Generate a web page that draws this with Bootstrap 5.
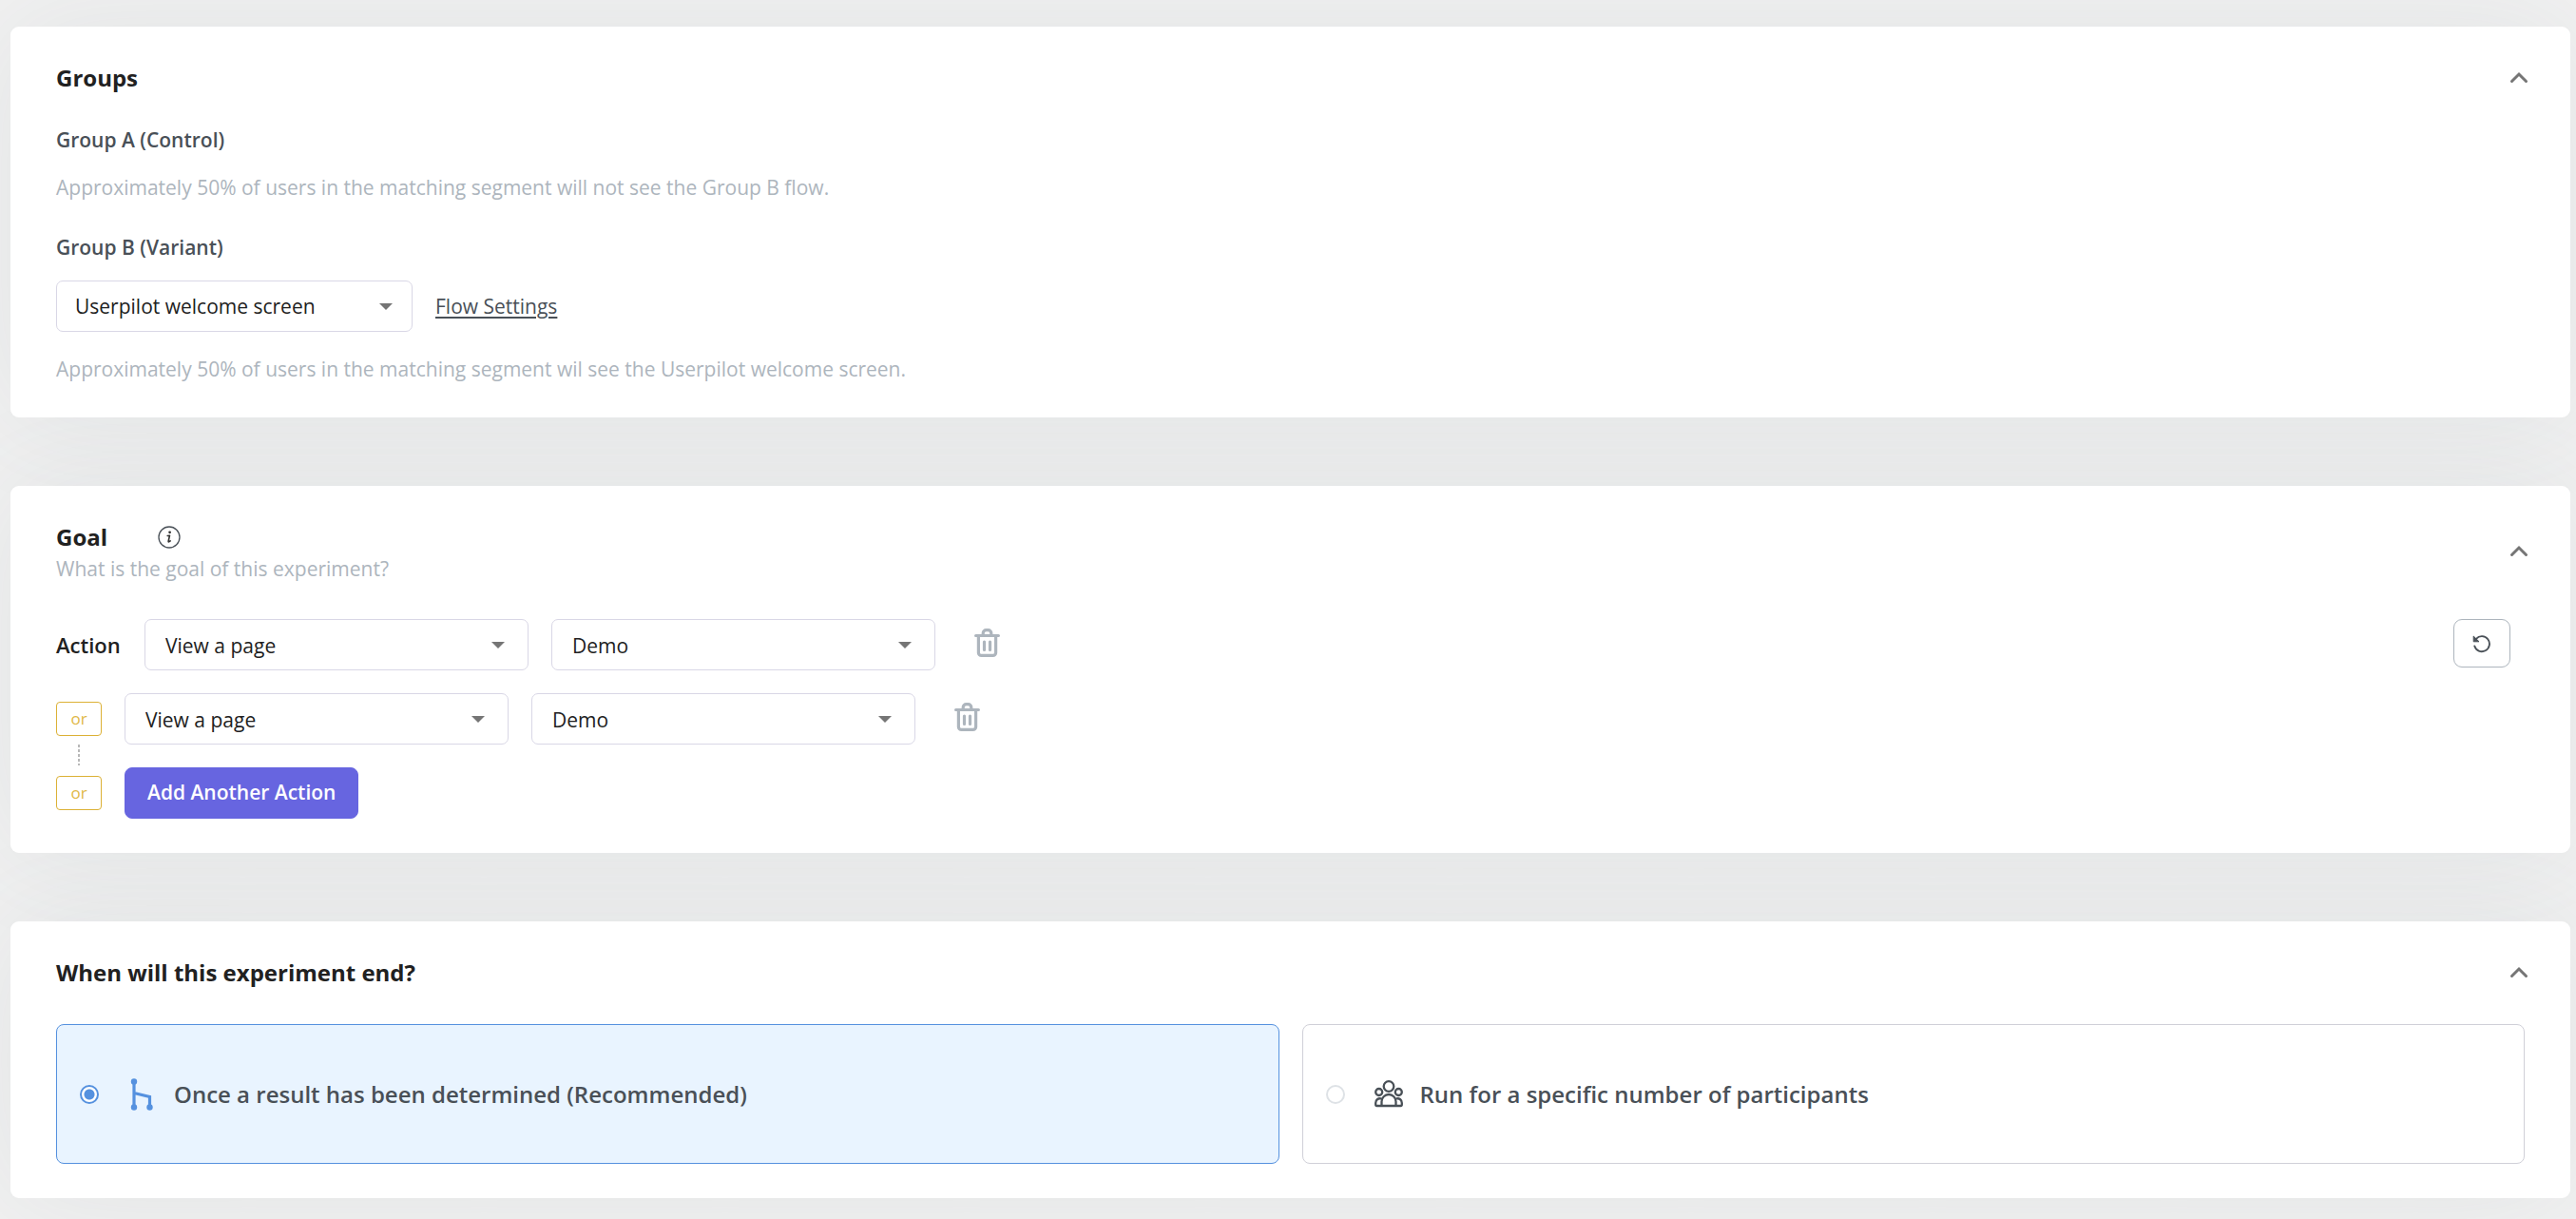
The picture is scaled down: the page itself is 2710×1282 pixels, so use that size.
<!DOCTYPE html>
<html lang="en">
<head>
<meta charset="utf-8">
<meta name="viewport" content="width=device-width, initial-scale=1">
<title>Experiment settings</title>
<link href="https://cdn.jsdelivr.net/npm/bootstrap@5.3.0/dist/css/bootstrap.min.css" rel="stylesheet">
<style>
  body { background: #f1f1f1; color: #212121; font-family: "Open Sans", "Noto Sans", sans-serif; font-size: 21px; line-height: 30px; overflow-x: hidden; }
  .page { padding: 28px 6px 22px 11px; gap: 72px; isolation: isolate; }
  .panel { position: relative; background: #fff; border-radius: 9px; padding: 36px 48px; }
  .panel::before { content: ""; position: absolute; inset: 0; z-index: -1; border-radius: 9px; box-shadow: 0 0 120px rgba(80, 95, 115, .09); }
  .panel-head { margin-right: -6px; }
  .panel h2 { font-size: 24px; line-height: 36px; font-weight: 700; margin: 0; }
  .panel h3 { font-size: 21px; line-height: 30px; font-weight: 600; color: #495057; margin: 0; }
  .hint { color: #adb5bd; margin: 0; }
  .groups-body { gap: 20px; padding-top: 32px; }
  .variant { padding-top: 13px; }
  .goal-body { padding-top: 38px; }
  .end-body { padding-top: 36px; }
  .bare { background: none; border: 0; padding: 0; display: flex; align-items: center; }
  .pick { height: 54px; border: 1px solid #d9d7e6; border-radius: 7px; color: #212121; font-size: 21px; line-height: 30px; padding: 2px 48px 0 21px; width: 404px;
    background: #fff url("data:image/svg+xml,%3Csvg xmlns='http://www.w3.org/2000/svg' viewBox='0 0 14 7'%3E%3Cpath fill='%23757575' d='M0 0h14L7 7z'/%3E%3C/svg%3E") no-repeat right 24px center / 14px 7px; }
  .pick-flow { width: 375px; padding-top: 0; padding-left: 19px; background-position: right 20px center; }
  .flow-link { color: #495057; text-underline-offset: 3px; }
  .action-label { font-size: 22px; font-weight: 600; min-width: 69px; }
  .tool { height: 50px; margin-left: 17px; }
  .or-tag { width: 48px; height: 36px; border: 1px solid #dcb136; border-radius: 4px; color: #e0b848; font-size: 17px; line-height: 34px; text-align: center; }
  .join { position: relative; }
  .join::after { content: ""; position: absolute; left: 22px; top: 44px; width: 2px; height: 22px; background: repeating-linear-gradient(#b8b8b8 0 3px, transparent 3px 5px); }
  .btn-add { --bs-btn-bg: #6765e0; --bs-btn-border-color: #6765e0; --bs-btn-color: #fff; --bs-btn-hover-bg: #5654cf; --bs-btn-hover-color: #fff; height: 54px; padding: 0 23px; font-size: 21px; font-weight: 600; border-radius: 8px; }
  .btn-reset { width: 60px; height: 51px; border: 1px solid #adb5bd; border-radius: 9px; background: #fff; padding: 0; margin-right: 15px; }
  .choice { flex: 1 1 0; height: 147px; border: 1px solid #d0d0d8; border-radius: 8px; padding: 0 24px; font-size: 24px; line-height: 36px; font-weight: 600; color: #495057; cursor: pointer; }
  .choice.picked { background: #e9f4ff; border-color: #5591df; }
  .choice input { appearance: none; width: 20px; height: 20px; margin: 0; border: 2px solid #dee2e6; border-radius: 50%; flex: none; }
  .choice input:checked { border-color: #5591df; background: radial-gradient(circle, #5591df 0 5px, #fff 6px); }
  .pic { width: 30px; height: 36px; margin: 0 18px 0 31px; flex: none; }
</style>
<script src="https://cdn.jsdelivr.net/npm/bootstrap@5.3.0/dist/js/bootstrap.bundle.min.js"></script>
</head>
<body>
<svg class="d-none" xmlns="http://www.w3.org/2000/svg">
  <symbol id="chevron" viewBox="0 0 24 24"><path d="M4.500 15.500 12 8 19.500 15.500" fill="none" stroke="#757575" stroke-width="3" stroke-linecap="round"/></symbol>
  <symbol id="trash" viewBox="0 0 27 30"><g fill="none" stroke="#adb5bd" stroke-linecap="round" stroke-linejoin="round" stroke-width="3.200"><path d="M1.600 7.500h23.800"/><path d="M9.200 7V5a3.300 3.300 0 0 1 3.300-3.300h2A3.300 3.300 0 0 1 17.800 5v2"/><path d="M4.400 8v17.400a3 3 0 0 0 3 3h12.200a3 3 0 0 0 3-3V8"/><path d="M10.500 14v8.500M16.500 14v8.500"/></g></symbol>
</svg>
<main class="page d-flex flex-column">
  <section class="panel">
    <div class="panel-head d-flex justify-content-between align-items-center">
      <h2>Groups</h2>
      <button class="bare" type="button" aria-label="Collapse groups"><svg width="24" height="24"><use href="#chevron"/></svg></button>
    </div>
    <div class="groups-body d-flex flex-column">
      <h3>Group A (Control)</h3>
      <p class="hint">Approximately 50% of users in the matching segment will not see the Group B flow.</p>
      <h3 class="variant">Group B (Variant)</h3>
      <div class="d-flex align-items-center gap-4">
        <select class="form-select pick pick-flow" aria-label="Flow"><option>Userpilot welcome screen</option></select>
        <a class="flow-link" href="#">Flow Settings</a>
      </div>
      <p class="hint pt-1">Approximately 50% of users in the matching segment wil see the Userpilot welcome screen.</p>
    </div>
  </section>

  <section class="panel">
    <div class="panel-head d-flex justify-content-between align-items-center">
      <div>
        <div class="d-flex align-items-center">
          <h2>Goal</h2>
          <svg class="ms-5" width="36" height="24" viewBox="-5 0 36 24" role="img" aria-label="Info"><circle cx="12" cy="12" r="11" fill="none" stroke="#495057" stroke-width="1.300"/><circle cx="12.600" cy="6.800" r="1.400" fill="#333"/><path d="M10.200 10.500l2.300-.3-1.300 5.800q-.4 1.800 2-.1" fill="none" stroke="#333" stroke-width="1.600" stroke-linecap="round" stroke-linejoin="round"/></svg>
        </div>
        <p class="hint">What is the goal of this experiment?</p>
      </div>
      <button class="bare" type="button" aria-label="Collapse goal"><svg width="24" height="24"><use href="#chevron"/></svg></button>
    </div>
    <div class="goal-body d-flex flex-column gap-4">
      <div class="d-flex align-items-center gap-4">
        <span class="action-label">Action</span>
        <select class="form-select pick" aria-label="First action"><option>View a page</option></select>
        <select class="form-select pick" aria-label="First page"><option>Demo</option></select>
        <button class="bare tool align-self-start" type="button" aria-label="Delete first action"><svg width="27" height="30"><use href="#trash"/></svg></button>
        <button class="btn-reset align-self-start ms-auto d-flex align-items-center justify-content-center" type="button" aria-label="Reset"><svg width="20" height="20" viewBox="0 0 20 20"><path d="M2.300 12.500A8 8 0 1 0 4 4.800" fill="none" stroke="#495057" stroke-width="1.900" stroke-linecap="round"/><path d="M1.200 2v5.800h5.800z" fill="#495057" stroke="#495057" stroke-linejoin="round"/></svg></button>
      </div>
      <div class="d-flex align-items-center gap-4">
        <span class="or-tag join">or</span>
        <select class="form-select pick" aria-label="Second action"><option>View a page</option></select>
        <select class="form-select pick" aria-label="Second page"><option>Demo</option></select>
        <button class="bare tool align-self-start" type="button" aria-label="Delete second action"><svg width="27" height="30"><use href="#trash"/></svg></button>
      </div>
      <div class="d-flex align-items-center gap-4">
        <span class="or-tag">or</span>
        <button class="btn btn-add" type="button">Add Another Action</button>
      </div>
    </div>
  </section>

  <section class="panel">
    <div class="panel-head d-flex justify-content-between align-items-center">
      <h2>When will this experiment end?</h2>
      <button class="bare" type="button" aria-label="Collapse end condition"><svg width="24" height="24"><use href="#chevron"/></svg></button>
    </div>
    <div class="end-body d-flex gap-4">
      <label class="choice picked d-flex align-items-center" for="end-result">
        <input type="radio" name="end" id="end-result" checked>
        <svg class="pic" viewBox="0 0 30 36" aria-hidden="true"><g fill="#5591df"><circle cx="6" cy="4.500" r="3.200"/><circle cx="6" cy="31.500" r="3.200"/><circle cx="22.500" cy="31.500" r="3.200"/></g><path d="M6 4v27M6 16.500l16.500 4v11" fill="none" stroke="#5591df" stroke-width="3.200"/></svg>
        Once a result has been determined (Recommended)
      </label>
      <label class="choice d-flex align-items-center" for="end-count">
        <input type="radio" name="end" id="end-count">
        <svg class="pic" viewBox="0 0 30 36" aria-hidden="true"><g fill="none" stroke="#495057" stroke-width="2.300" stroke-linejoin="round"><circle cx="15" cy="9.500" r="5.300"/><circle cx="4.700" cy="15.500" r="3.500"/><circle cx="25.300" cy="15.500" r="3.500"/><path d="M7.500 30v-4.500a7.500 7.500 0 0 1 15 0V30"/><path d="M7.500 22.500C3.500 21.500 1.200 24 1.200 27v1.500Q1.200 30 2.500 30h25q1.300 0 1.300-1.500V27c0-3-2.300-5.500-6.300-4.500"/></g></svg>
        Run for a specific number of participants
      </label>
    </div>
  </section>
</main>
</body>
</html>
